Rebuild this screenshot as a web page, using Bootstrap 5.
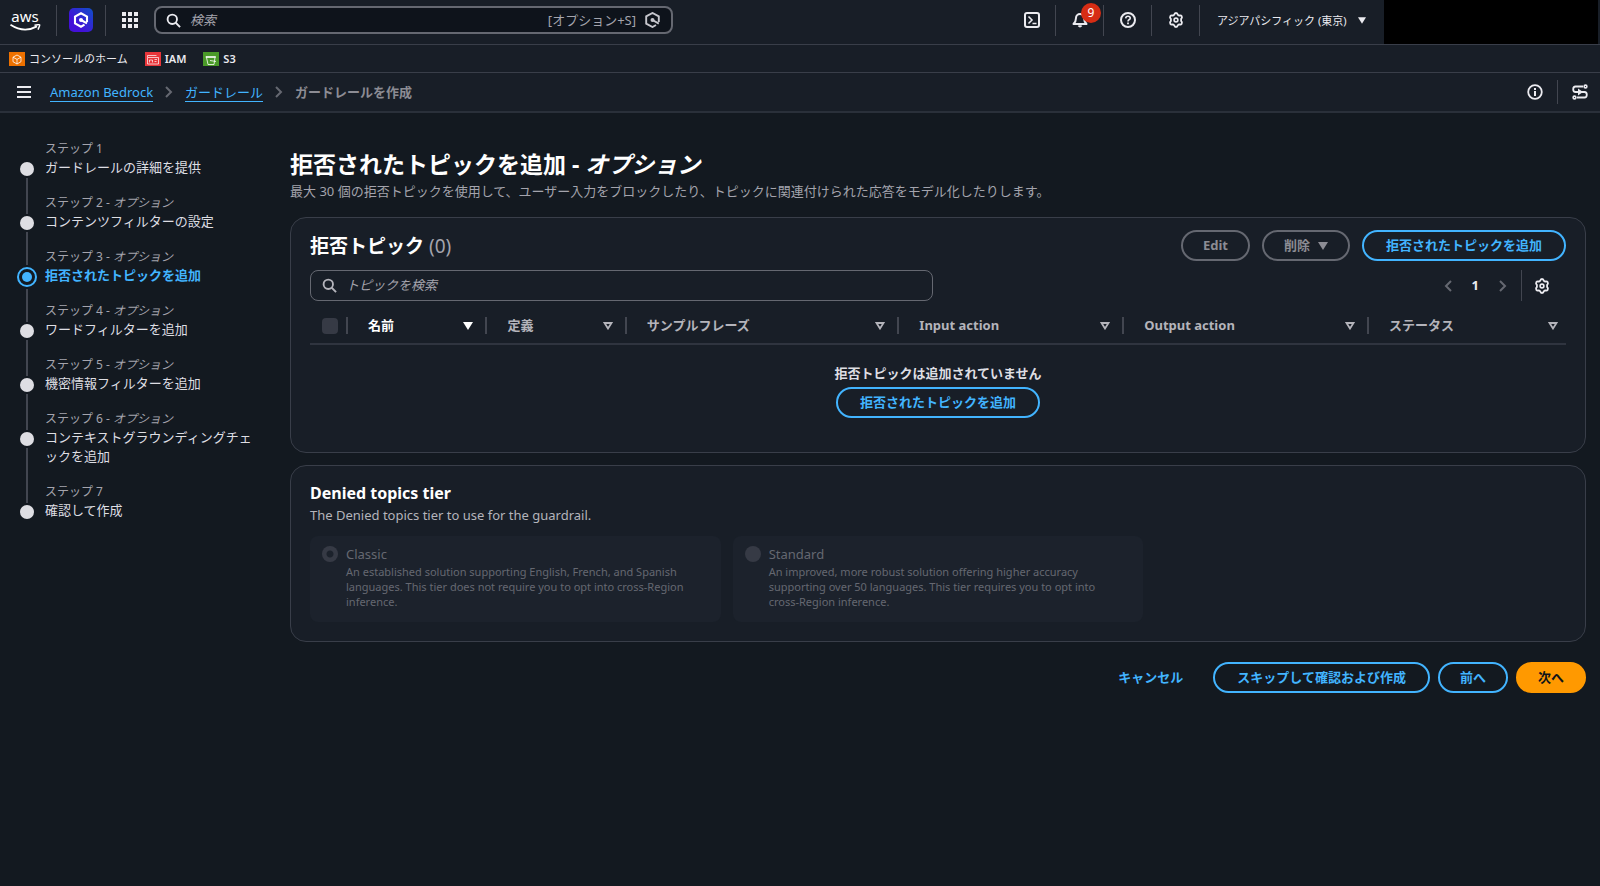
<!DOCTYPE html>
<html lang="ja" data-bs-theme="dark">
<head>
<meta charset="utf-8">
<meta name="viewport" content="width=device-width, initial-scale=1">
<title>ガードレールを作成 | Amazon Bedrock</title>
<link rel="stylesheet" href="https://cdn.jsdelivr.net/npm/bootstrap@5.3.0/dist/css/bootstrap.min.css">
<style>
:root {
  --page: #131920; --surface: #181e27; --line: #393e49; --accent: #42b4ff;
  --ink: #ebebf0; --muted: #a4a4ad; --dim: #8c8c94; --off: #656871;
}
body { background: var(--page); color: var(--ink); font: 13px/19px "Noto Sans", "Noto Sans CJK JP", sans-serif; }
svg { display: block; flex: none; }
.stroke { fill: none; stroke: currentColor; stroke-width: 2; }
.thin { stroke-width: 1.6; }
a { color: var(--accent); }
button.bare { background: none; border: 0; padding: 0; color: inherit; }

.topbar { height: 45px; background: var(--surface); border-bottom: 1px solid var(--line); }
.aws-logo { width: 32px; margin: 0 15px 0 9px; color: #fff; text-decoration: none; font-size: 15px; line-height: 15px; }
.vline { width: 1px; height: 31px; background: #424650; flex: none; }
.vline.short { height: 24px; }
.tool { width: 47px; }
.global-search { width: 519px; height: 28px; border: 2px solid #656871; border-radius: 8px; background: #0e131b; padding: 0 11px 0 10px; gap: 9px; }
.ghost-input { background: none; border: 0; outline: 0; color: var(--ink); padding: 0; min-width: 0; }
.ghost-input::placeholder { color: var(--muted); font-style: italic; opacity: 1; }
.hint { color: var(--muted); }
.alert-count { width: 20px; height: 20px; left: 25px; top: -9px; background: #d62d14; color: #fff; font-size: 12px; line-height: 20px; border-radius: 50%; text-align: center; }
button.region { font-size: 11px; width: 184px; padding: 0 18px 0 17px; }
.account { width: 214px; background: #000; margin-right: 2px; }

.favorites { height: 28px; background: var(--surface); border-bottom: 1px solid var(--line); font-size: 11px; padding-left: 9px; gap: 17px; }
.favorites a { color: var(--ink); text-decoration: none; gap: 4px; }
.trail { height: 40px; background: var(--surface); border-bottom: 2px solid #2a303a; padding: 0 12px 0 17px; }
.trail a { text-decoration: none; border-bottom: 1px solid var(--accent); line-height: 18px; }
.trail ol { gap: 12px; margin-left: 3px; }
.here-now { color: var(--dim); }
.chev, button.chev { color: var(--off); }
.trail-tools { gap: 14px; }

.steps { width: 260px; padding: 26px 0 0 17px; }
.steps li { gap: 8px; }
.rail { width: 20px; margin-top: 1px; margin-bottom: -1px; }
.rail .seg-top { height: 20px; width: 2px; }
.rail .seg { width: 2px; background: #424650; }
.rail .seg-end { flex: 1; }
.dot { width: 14px; height: 14px; margin: 2px 0; border-radius: 50%; background: #dedee3; }
.here .seg-top { height: 17px; }
.here .dot { width: 20px; height: 20px; border: 2px solid var(--accent); background: var(--accent); background-clip: content-box; padding: 3px; }
.step-text { width: 215px; padding-bottom: 16px; line-break: anywhere; color: #dedee3; }
.step-text small { font-size: 12px; color: var(--muted); display: block; }
.here strong { color: var(--accent); }

.layout { gap: 30px; }
.page-main { padding: 37px 14px 0 0; min-width: 0; }
h1 { font-size: 23px; line-height: 29px; font-weight: 700; margin: 0; }
h2 { font-size: 19px; line-height: 24px; font-weight: 700; margin: 0; }
.lede { color: var(--muted); margin: 3px 0 16px; }
.panel { background: var(--surface); border: 1px solid var(--line); border-radius: 16px; padding: 12px 19px 0; }
.count { font-weight: 400; color: var(--muted); }
.pill { height: 31px; border: 2px solid var(--accent); border-radius: 16px; padding: 0 20px; color: var(--accent); font-size: 13px; line-height: 19px; font-weight: 700; background: none; }
.pill:disabled { border-color: var(--off); color: var(--dim); opacity: 1; }
.pill.wide { padding: 0 22px; }
.pill.go { background: #ff9900; border-color: #ff9900; color: #0f141a; }
.pill.plain { border-color: transparent; }
.panel-head { gap: 12px; }
.filter-row { margin-top: 9px; }
.topic-search { width: 49.6%; height: 31px; border: 1px solid var(--off); border-radius: 8px; padding: 0 11px; gap: 9px; }
.pager { gap: 20px; margin-right: 14px; }

.topics { table-layout: fixed; width: 100%; margin-top: 7px; }
.topics th { height: 36px; padding: 0; border-bottom: 2px solid #2f343f; color: #b4b4bb; font-weight: 700; }
.topics th > div { height: 17px; border-right: 2px solid #424650; padding: 0 12px 0 20px; }
.topics th:last-child > div { border: 0; padding-right: 8px; }
.topics th:first-child > div { padding: 0 0 0 12px; }
.c-pick { width: 38px; } .c-a { width: 11.1%; } .c-b { width: 21.7%; } .c-c { width: 17.9%; } .c-d { width: 19.5%; }
.box-pick { appearance: none; width: 16px; height: 16px; border-radius: 4px; background: #363a45; margin: 0; }
.empty { padding: 19px 0 34px; text-align: center; color: #dedee3; }
.empty strong { display: block; margin-bottom: 4px; }

.tier { padding: 16px 19px 19px; margin-top: 12px; }
.tier h2 { font-size: 16px; line-height: 22px; }
.tier p { color: #b4b4bb; margin: 1px 0 11px; line-height: 20px; }
.tiles { display: grid; grid-template-columns: repeat(3, 1fr); gap: 12px; }
.tile { background: #1c222c; border-radius: 8px; padding: 8px 24px 13px 12px; gap: 8px; color: var(--off); font-size: 11px; line-height: 15px; }
.tile b { display: block; font-size: 13px; line-height: 20px; font-weight: 400; }
.tile input { appearance: none; width: 16px; height: 16px; margin: 2px 0 0; border-radius: 50%; background: #363a45; flex: none; }
.tile input:checked { background: radial-gradient(circle, #1c222c 3px, #363a45 4px); }
.wizard-nav { margin-top: 20px; gap: 8px; }
</style>
<script src="https://cdn.jsdelivr.net/npm/bootstrap@5.3.0/dist/js/bootstrap.bundle.min.js"></script>
</head>
<body>
<svg class="d-none" aria-hidden="true">
  <symbol id="i-search" viewBox="0 0 16 16"><circle cx="6.7" cy="6.7" r="5" class="stroke"/><path d="M10.4 10.4 15 15" class="stroke"/></symbol>
  <symbol id="i-gear" viewBox="0 0 16 16"><path class="stroke" style="stroke-width:1.8" stroke-linejoin="round" d="M6.200 2.800 Q6.400 1 8 1 T9.800 2.800 L11.200 3.600 Q12.900 2.900 13.700 4.300 T13.100 7 V9 Q14.500 10.300 13.700 11.700 T11.200 12.400 L9.800 13.200 Q9.600 15 8 15 T6.200 13.200 L4.800 12.400 Q3.100 13.100 2.300 11.700 T2.900 9 V7 Q1.500 5.700 2.300 4.300 T4.800 3.600 Z"/><circle cx="8" cy="8" r="1.9" class="stroke thin"/></symbol>
  <symbol id="i-down" viewBox="0 0 10 8"><path d="M0 0h10L5 8z" fill="currentColor"/></symbol>
  <symbol id="i-sort" viewBox="0 0 10 8"><path d="M1.500 1h7L5 6.500z" class="stroke" style="stroke-width:1.800"/></symbol>
  <symbol id="i-chev" viewBox="0 0 8 12"><path d="m1 1 5 5-5 5" class="stroke"/></symbol>
</svg>

<header class="topbar d-flex align-items-stretch">
  <div class="d-flex align-items-center flex-grow-1 pb-1">
    <a href="#" class="aws-logo text-center" aria-label="AWS"><span class="d-block">aws</span>
      <svg width="32" height="8" viewBox="0 0 32 8"><path d="M1.500 .8Q15 9.500 28 2.400" fill="none" stroke="#fff" stroke-width="1.800"/><path d="M25.500 1.200q5-1 5.200-.2t-1.700 4.600" fill="none" stroke="#fff" stroke-width="1.500"/></svg></a>
    <div class="vline"></div>
    <button class="bare px-2 mx-1" aria-label="Amazon Q"><svg width="24" height="24" viewBox="0 0 24 24"><defs><linearGradient id="q" x1="0" y1="1" x2="1" y2="0"><stop offset=".3" stop-color="#4310d8"/><stop offset="1" stop-color="#1050c8"/></linearGradient></defs><rect width="24" height="24" rx="5" fill="url(#q)"/><path d="M18 14V8.700L12 5.300 6 8.700v6.600l6 3.400 3.500-2M12 12l6 3.400" fill="none" stroke="#fff" stroke-width="2.100"/><circle cx="12" cy="12" r="2" fill="#fff"/></svg></button>
    <div class="vline"></div>
    <button class="bare px-3" aria-label="サービス"><svg width="16" height="16" viewBox="0 0 16 16" fill="#ebebf0"><path d="M0 0h4v4H0zM6 0h4v4H6zM12 0h4v4h-4zM0 6h4v4H0zM6 6h4v4H6zM12 6h4v4h-4zM0 12h4v4H0zM6 12h4v4H6zM12 12h4v4h-4z"/></svg></button>
    <div class="global-search d-flex align-items-center">
      <svg width="15" height="15"><use href="#i-search"/></svg>
      <input class="ghost-input flex-grow-1" type="search" placeholder="検索" aria-label="検索">
      <span class="hint">[オプション+S]</span>
      <svg width="15" height="16" viewBox="0 0 15 16"><path d="M13.800 10V4.400L7.500 1 1.200 4.400v7.200L7.500 15l3.500-2M7.500 8l6.300 3.600" fill="none" stroke="#c6c6cd" stroke-width="1.900"/><circle cx="7.500" cy="8" r="2" fill="#c6c6cd"/></svg>
    </div>
    <div class="ms-auto d-flex align-items-center">
      <button class="bare tool d-flex justify-content-center" aria-label="CloudShell"><svg width="16" height="16" viewBox="0 0 16 16"><rect x="1" y="1" width="14" height="14" rx="2" class="stroke"/><path d="m4.500 4.500 3.500 3.500-3.500 3.500M8.500 11.500h4" class="stroke thin"/></svg></button>
      <div class="vline"></div>
      <button class="bare tool d-flex justify-content-center position-relative" aria-label="通知"><svg width="16" height="16" viewBox="0 0 16 16"><path d="M1.500 12Q4 9.500 4 6a4 4 0 0 1 8 0q0 3.500 2.500 6z" class="stroke" stroke-linejoin="round"/><path d="M6.500 13.500q1.500 2 3 0" class="stroke"/></svg><span class="position-absolute alert-count">9</span></button>
      <div class="vline"></div>
      <button class="bare tool d-flex justify-content-center" aria-label="ヘルプ"><svg width="16" height="16" viewBox="0 0 16 16"><circle cx="8" cy="8" r="7" class="stroke"/><path d="M5.700 6.300q.2-2.100 2.300-2.100t2.300 1.900q0 1.100-1.300 1.700-1 .6-1 1.600" class="stroke thin"/><path d="M7.100 10.600h1.800v1.700H7.100z" fill="currentColor"/></svg></button>
      <div class="vline"></div>
      <button class="bare tool d-flex justify-content-center" aria-label="設定"><svg width="16" height="16"><use href="#i-gear"/></svg></button>
      <div class="vline"></div>
      <button class="bare region d-flex align-items-center justify-content-between">アジアパシフィック (東京) <svg width="8" height="7"><use href="#i-down"/></svg></button>
    </div>
  </div>
  <div class="account"></div>
</header>

<nav class="favorites d-flex align-items-center" aria-label="お気に入り">
  <a href="#" class="d-flex align-items-center"><svg width="16" height="14" viewBox="0 0 16 14"><rect width="16" height="14" fill="#ed7100"/><path d="M8 3 12 5.200v4.500L8 12 4 9.700V5.200zM4 5.200l4 2.200 4-2.200M8 7.400V12" fill="none" stroke="#fff" stroke-opacity=".8"/></svg>コンソールのホーム</a>
  <a href="#" class="d-flex align-items-center"><svg width="16" height="14" viewBox="0 0 16 14"><rect width="16" height="14" fill="#e8353a"/><path d="M2.500 5V3.500h9M2.500 5.500h11v6.500h-11zM4.500 10.500V8h3v2.500M9.500 7.500h2.500M9.500 9.500h2" fill="none" stroke="#fff" stroke-opacity=".7"/></svg><span class="fw-semibold">IAM</span></a>
  <a href="#" class="d-flex align-items-center"><svg width="16" height="14" viewBox="0 0 16 14"><rect width="16" height="14" fill="#4a9a28"/><path d="M3 5.500v-1h9.500v1zM3.500 5.500 5 12.500h6l1-7M7 8.500l6 1" fill="none" stroke="#fff" stroke-opacity=".8"/></svg><span class="fw-semibold">S3</span></a>
</nav>

<nav class="trail d-flex align-items-center" aria-label="パンくずリスト">
  <button class="bare me-3" aria-label="メニュー"><svg width="14" height="13" viewBox="0 0 14 13"><path d="M0 1h14M0 6h14M0 11h14" class="stroke"/></svg></button>
  <ol class="list-unstyled d-flex align-items-center mb-0">
    <li><a href="#">Amazon Bedrock</a></li>
    <li class="chev"><svg width="8" height="12"><use href="#i-chev"/></svg></li>
    <li><a href="#">ガードレール</a></li>
    <li class="chev"><svg width="8" height="12"><use href="#i-chev"/></svg></li>
    <li class="fw-bold here-now">ガードレールを作成</li>
  </ol>
  <div class="trail-tools ms-auto d-flex align-items-center">
    <button class="bare" aria-label="情報"><svg width="16" height="16" viewBox="0 0 16 16"><circle cx="8" cy="8" r="6.800" class="stroke" style="stroke-width:1.800"/><path d="M7 4h2v2H7zM7 7h2v5H7z" fill="currentColor"/></svg></button>
    <div class="vline short"></div>
    <button class="bare" aria-label="チュートリアル"><svg width="16" height="16" viewBox="0 0 16 16"><path d="M11 2.500H3.500Q1.200 2.500 1.200 5.200T3.500 8h9q2.300 0 2.300 2.700t-2.300 2.800H5" class="stroke" style="stroke-width:1.800"/><circle cx="13.500" cy="2.500" r="1.400" class="stroke thin"/><circle cx="2.500" cy="13.500" r="1.400" class="stroke thin"/><path d="m6 4.500 5 3.500-5 3.500z" fill="currentColor"/></svg></button>
  </div>
</nav>

<div class="layout d-flex">
  <aside class="flex-shrink-0">
    <ol class="steps list-unstyled mb-0">
      <li class="d-flex"><div class="rail d-flex flex-column align-items-center"><i class="seg-top"></i><i class="dot"></i><i class="seg seg-end"></i></div><div class="step-text"><small>ステップ 1</small>ガードレールの詳細を提供</div></li>
      <li class="d-flex"><div class="rail d-flex flex-column align-items-center"><i class="seg seg-top"></i><i class="dot"></i><i class="seg seg-end"></i></div><div class="step-text"><small>ステップ 2 - <em>オプション</em></small>コンテンツフィルターの設定</div></li>
      <li class="d-flex here" aria-current="step"><div class="rail d-flex flex-column align-items-center"><i class="seg seg-top"></i><i class="dot"></i><i class="seg seg-end"></i></div><div class="step-text"><small>ステップ 3 - <em>オプション</em></small><strong>拒否されたトピックを追加</strong></div></li>
      <li class="d-flex"><div class="rail d-flex flex-column align-items-center"><i class="seg seg-top"></i><i class="dot"></i><i class="seg seg-end"></i></div><div class="step-text"><small>ステップ 4 - <em>オプション</em></small>ワードフィルターを追加</div></li>
      <li class="d-flex"><div class="rail d-flex flex-column align-items-center"><i class="seg seg-top"></i><i class="dot"></i><i class="seg seg-end"></i></div><div class="step-text"><small>ステップ 5 - <em>オプション</em></small>機密情報フィルターを追加</div></li>
      <li class="d-flex"><div class="rail d-flex flex-column align-items-center"><i class="seg seg-top"></i><i class="dot"></i><i class="seg seg-end"></i></div><div class="step-text"><small>ステップ 6 - <em>オプション</em></small>コンテキストグラウンディングチェックを追加</div></li>
      <li class="d-flex"><div class="rail d-flex flex-column align-items-center"><i class="seg seg-top"></i><i class="dot"></i></div><div class="step-text"><small>ステップ 7</small>確認して作成</div></li>
    </ol>
  </aside>

  <main class="page-main flex-grow-1">
    <h1>拒否されたトピックを追加 - <em>オプション</em></h1>
    <p class="lede">最大 30 個の拒否トピックを使用して、ユーザー入力をブロックしたり、トピックに関連付けられた応答をモデル化したりします。</p>

    <section class="panel">
      <div class="panel-head d-flex align-items-center">
        <h2 class="me-auto">拒否トピック <span class="count">(0)</span></h2>
        <button class="pill" disabled>Edit</button>
        <button class="pill d-flex align-items-center gap-2" disabled>削除 <svg width="10" height="8"><use href="#i-down"/></svg></button>
        <button class="pill wide">拒否されたトピックを追加</button>
      </div>
      <div class="filter-row d-flex align-items-center">
        <div class="topic-search d-flex align-items-center">
          <svg width="15" height="15" style="color:#b4b4bb"><use href="#i-search"/></svg>
          <input class="ghost-input flex-grow-1" type="search" placeholder="トピックを検索" aria-label="トピックを検索">
        </div>
        <div class="pager ms-auto d-flex align-items-center">
          <button class="bare chev" aria-label="前のページ"><svg width="8" height="12"><use href="#i-chev" transform="matrix(-1 0 0 1 8 0)"/></svg></button>
          <button class="bare fw-bold">1</button>
          <button class="bare chev" aria-label="次のページ"><svg width="8" height="12"><use href="#i-chev"/></svg></button>
        </div>
        <div class="vline"></div>
        <button class="bare ms-2 ps-1 me-3" aria-label="表示設定"><svg width="16" height="16"><use href="#i-gear"/></svg></button>
      </div>
      <table class="topics">
        <thead><tr>
          <th class="c-pick"><div class="d-flex align-items-center"><input class="box-pick" type="checkbox" disabled aria-label="すべて選択"></div></th>
          <th class="c-a text-white"><div class="d-flex align-items-center justify-content-between">名前 <svg width="10" height="8"><use href="#i-down"/></svg></div></th>
          <th class="c-a"><div class="d-flex align-items-center justify-content-between">定義 <svg width="10" height="8"><use href="#i-sort"/></svg></div></th>
          <th class="c-b"><div class="d-flex align-items-center justify-content-between">サンプルフレーズ <svg width="10" height="8"><use href="#i-sort"/></svg></div></th>
          <th class="c-c"><div class="d-flex align-items-center justify-content-between">Input action <svg width="10" height="8"><use href="#i-sort"/></svg></div></th>
          <th class="c-d"><div class="d-flex align-items-center justify-content-between">Output action <svg width="10" height="8"><use href="#i-sort"/></svg></div></th>
          <th><div class="d-flex align-items-center justify-content-between">ステータス <svg width="10" height="8"><use href="#i-sort"/></svg></div></th>
        </tr></thead>
        <tbody><tr><td colspan="7" class="empty"><strong>拒否トピックは追加されていません</strong><button class="pill wide">拒否されたトピックを追加</button></td></tr></tbody>
      </table>
    </section>

    <section class="panel tier">
      <h2>Denied topics tier</h2>
      <p>The Denied topics tier to use for the guardrail.</p>
      <div class="tiles">
        <label class="tile d-flex"><input type="radio" name="tier" checked disabled><span><b>Classic</b>An established solution supporting English, French, and Spanish languages. This tier does not require you to opt into cross-Region inference.</span></label>
        <label class="tile d-flex"><input type="radio" name="tier" disabled><span><b>Standard</b>An improved, more robust solution offering higher accuracy supporting over 50 languages. This tier requires you to opt into cross-Region inference.</span></label>
      </div>
    </section>

    <div class="wizard-nav d-flex justify-content-end">
      <button class="pill plain">キャンセル</button>
      <button class="pill wide">スキップして確認および作成</button>
      <button class="pill">前へ</button>
      <button class="pill go">次へ</button>
    </div>
  </main>
</div>
</body>
</html>
